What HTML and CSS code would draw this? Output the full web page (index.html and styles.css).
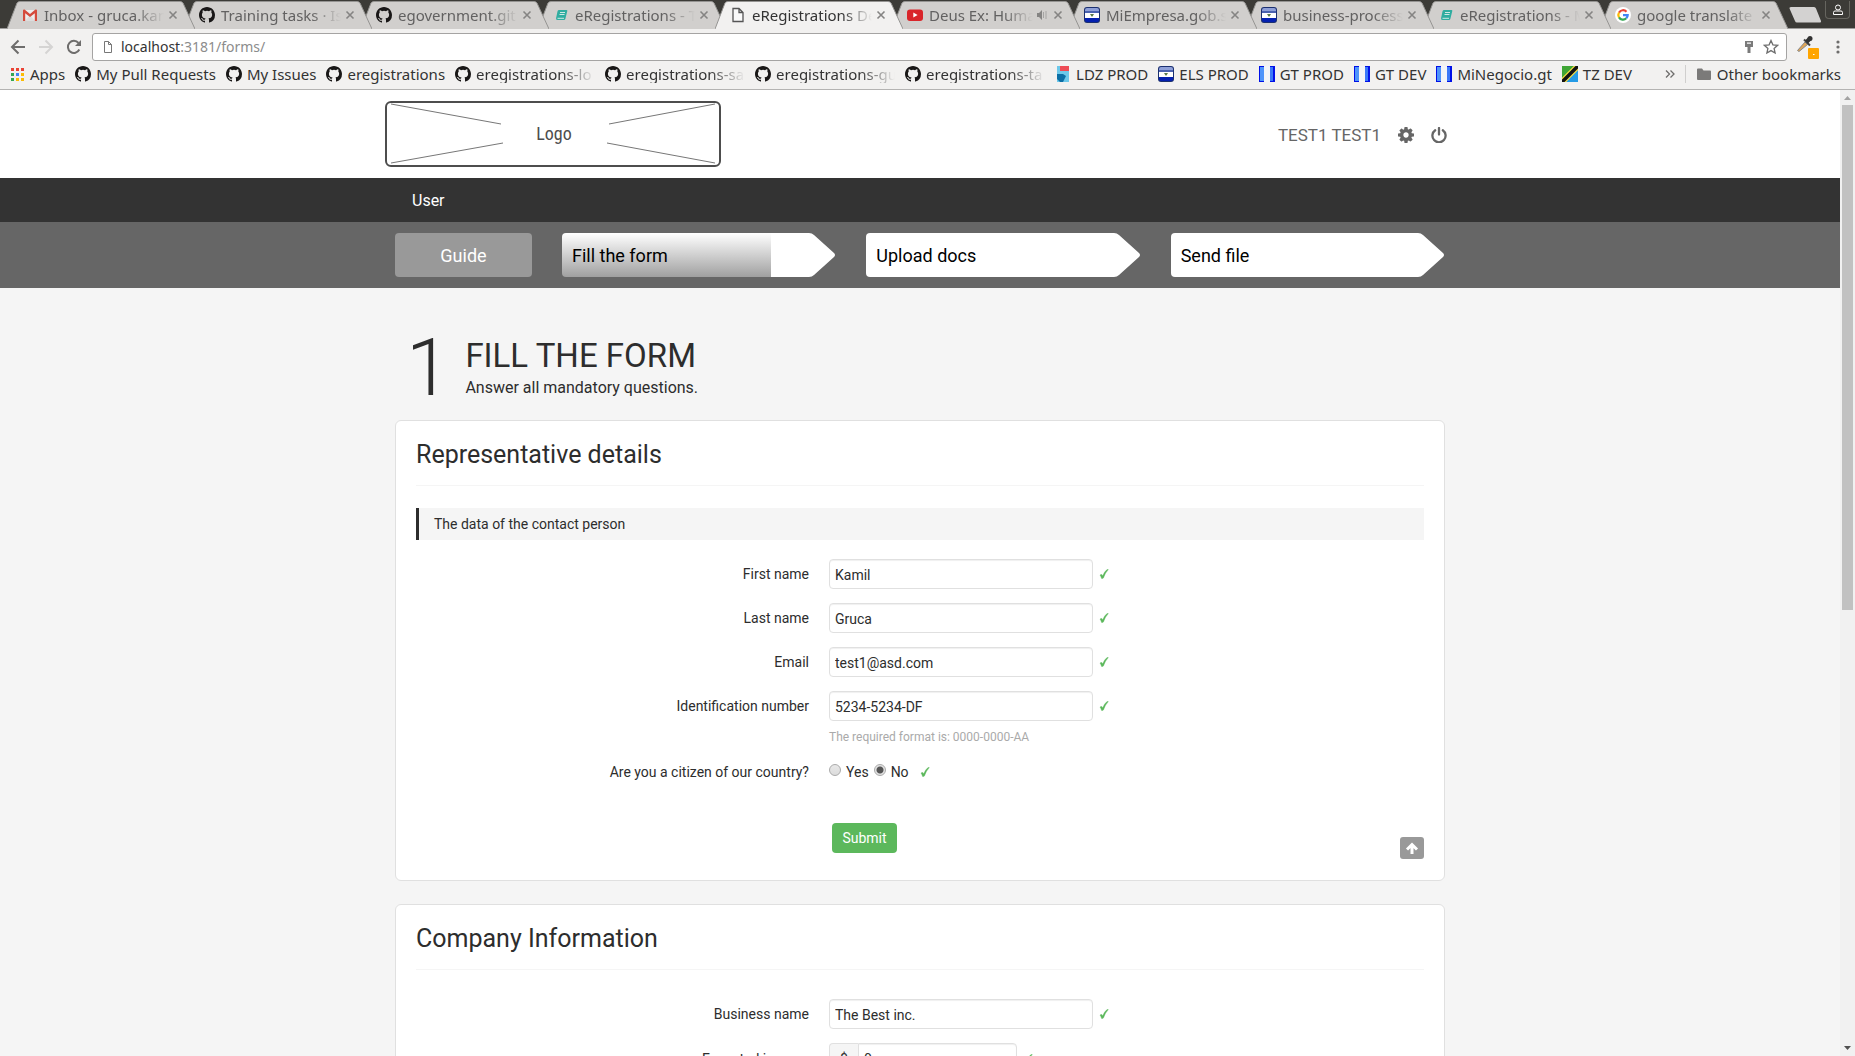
FILE: index.html
```html
<!DOCTYPE html>
<html lang="en">
<head>
<meta charset="utf-8">
<title>eRegistrations Demo</title>
<link rel="stylesheet" href="styles.css">
</head>
<body>
<svg class="sprite" aria-hidden="true">
  <symbol id="github" viewBox="0 0 16 16"><path fill="#191717" d="M8 0C3.58 0 0 3.58 0 8c0 3.54 2.29 6.53 5.47 7.59.4.07.55-.17.55-.38 0-.19-.01-.82-.01-1.49-2.01.37-2.53-.49-2.69-.94-.09-.23-.48-.94-.82-1.13-.28-.15-.68-.52-.01-.53.63-.01 1.08.58 1.23.82.72 1.21 1.87.87 2.33.66.07-.52.28-.87.51-1.07-1.78-.2-3.64-.89-3.64-3.95 0-.87.31-1.59.82-2.15-.08-.2-.36-1.02.08-2.12 0 0 .67-.21 2.2.82a7.6 7.6 0 0 1 4 0c1.53-1.04 2.2-.82 2.2-.82.44 1.1.16 1.92.08 2.12.51.56.82 1.27.82 2.15 0 3.07-1.87 3.75-3.65 3.95.29.25.54.73.54 1.48 0 1.07-.01 1.93-.01 2.2 0 .21.15.46.55.38A8.01 8.01 0 0 0 16 8c0-4.42-3.58-8-8-8z"/></symbol>
  <symbol id="gmail" viewBox="0 0 16 16"><path fill="#eee" d="M2 3h12v11H2z"/><path fill="#ddd" d="M3 14l5-6 5 6z"/><path fill="#d54b3d" d="M1 3.500q0-1 1-1h.6L8 7l5.400-4.500h.6q1 0 1 1V14h-2.200V6.300L8 10 3.200 6.300V14H1z"/></symbol>
  <symbol id="book" viewBox="0 0 16 16"><path fill="#2fada0" d="M6 3h7.500q1 0 .8 1l-2 8q-.3 1-1.300 1H4.500q-2 0-1.400-2l1.500-7Q5 3 6 3z"/><path d="M7 5.500h5M6.500 7.500h5M4.500 11.300h6.500" stroke="#cfe8e5" stroke-width="1"/></symbol>
  <symbol id="page" viewBox="0 0 16 16"><path fill="#fafafa" stroke="#555" stroke-width="1.300" d="M3 1.500h6l4 4v9H3zM9 1.500v4h4"/></symbol>
  <symbol id="youtube" viewBox="0 0 16 16"><rect y="2.500" width="16" height="11.500" rx="3" fill="#d9252a"/><path fill="#fff" d="M6.300 5.500v5l4.300-2.500z"/></symbol>
  <symbol id="salvador" viewBox="0 0 16 16"><rect width="16" height="16" rx="3" fill="#1c3070"/><path fill="#8fa0d8" d="M1 3q0-2 2-2h10q2 0 2 2v2H1z"/><path fill="#4a62b0" d="M1 4h14v2H1z"/><path fill="#fff" d="M1 6h14v5H1z"/><path fill="#5c7a4c" d="M6 7h4L8.500 9.500h-1z"/><path fill="#0420b0" d="M1 11h14v2q0 2-2 2H3q-2 0-2-2z"/></symbol>
  <symbol id="google" viewBox="0 0 16 16"><circle cx="8" cy="8" r="8" fill="#fff"/><g fill="none" stroke-width="2.200"><path stroke="#ea4335" d="M4 5.600A4.700 4.700 0 0 1 11.500 4.700"/><path stroke="#fbbc05" d="M4 5.600a4.700 4.700 0 0 0 0 4.800"/><path stroke="#34a853" d="M4 10.400a4.700 4.700 0 0 0 7.300.9"/><path stroke="#4285f4" d="M11.300 11.300A4.700 4.700 0 0 0 12.700 8.100H8"/></g></symbol>
  <symbol id="guatemala" viewBox="0 0 16 16"><path fill="#0010e8" d="M0 0h16v16H0z"/><path fill="#4e94fa" d="M1 1h4v14H1z"/><path fill="#3a78f8" d="M11 1h3v14h-3z"/><path fill="#f2f4f8" d="M5 0h6v16H5z"/></symbol>
  <symbol id="ldz" viewBox="0 0 16 16"><path fill="#6dc8ea" d="M2 0h12v16H2z"/><path fill="#ee4b55" d="M5 0h9v5H5z"/><path fill="#0b6ea5" d="M2 8h6l3 2-3 6H5L2 13z"/></symbol>
  <symbol id="tanzania" viewBox="0 0 16 16"><path fill="#3fa535" d="M0 0h16L0 16z"/><path fill="#259be6" d="M16 0v16H0z"/><path d="M0 16L16 0" stroke="#f5dc42" stroke-width="6"/><path d="M0 16L16 0" stroke="#111" stroke-width="3.500"/></symbol>
  <symbol id="close" viewBox="0 0 10 10"><path d="M1.500 1.500l7 7m0-7l-7 7" stroke="#858483" stroke-width="1.600"/></symbol>
  <symbol id="check" viewBox="0 0 10 10"><path fill="#5cb85c" stroke="#5cb85c" stroke-width=".4" d="M1 6q1-.9 1.800-.4.500.4.700 1.400Q5.500 2.500 8 .6q.6-.3 1.300 0Q6 4 4.400 9q-.8.7-1.800.5Q2.100 7.500 1 6z"/></symbol>
</svg>

<div class="tabstrip">
  <div class="tab"><svg class="tab-shape" viewBox="0 0 188 28" preserveAspectRatio="none"><path d="M0 28L10 2Q11 .5 13 .5H173Q175 .5 176 2L188 28"/></svg><svg class="fav"><use href="#gmail"/></svg><span class="tab-title">Inbox - gruca.kam</span><svg class="x"><use href="#close"/></svg></div>
  <div class="tab"><svg class="tab-shape" viewBox="0 0 188 28" preserveAspectRatio="none"><path d="M0 28L10 2Q11 .5 13 .5H173Q175 .5 176 2L188 28"/></svg><svg class="fav"><use href="#github"/></svg><span class="tab-title">Training tasks · Is</span><svg class="x"><use href="#close"/></svg></div>
  <div class="tab"><svg class="tab-shape" viewBox="0 0 188 28" preserveAspectRatio="none"><path d="M0 28L10 2Q11 .5 13 .5H173Q175 .5 176 2L188 28"/></svg><svg class="fav"><use href="#github"/></svg><span class="tab-title">egovernment.git</span><svg class="x"><use href="#close"/></svg></div>
  <div class="tab"><svg class="tab-shape" viewBox="0 0 188 28" preserveAspectRatio="none"><path d="M0 28L10 2Q11 .5 13 .5H173Q175 .5 176 2L188 28"/></svg><svg class="fav"><use href="#book"/></svg><span class="tab-title">eRegistrations - T</span><svg class="x"><use href="#close"/></svg></div>
  <div class="tab tab-active"><svg class="tab-shape" viewBox="0 0 188 28" preserveAspectRatio="none"><path d="M0 28L10 2Q11 .5 13 .5H173Q175 .5 176 2L188 28"/></svg><svg class="fav"><use href="#page"/></svg><span class="tab-title">eRegistrations De</span><svg class="x"><use href="#close"/></svg></div>
  <div class="tab"><svg class="tab-shape" viewBox="0 0 188 28" preserveAspectRatio="none"><path d="M0 28L10 2Q11 .5 13 .5H173Q175 .5 176 2L188 28"/></svg><svg class="fav"><use href="#youtube"/></svg><span class="tab-title">Deus Ex: Huma</span><svg class="sound" viewBox="0 0 10 10"><path fill="#858483" d="M0 3h2l3-3v10L2 7H0z"/><path d="M6.500 2v6M9 1v8" stroke="#a5a4a3"/></svg><svg class="x"><use href="#close"/></svg></div>
  <div class="tab"><svg class="tab-shape" viewBox="0 0 188 28" preserveAspectRatio="none"><path d="M0 28L10 2Q11 .5 13 .5H173Q175 .5 176 2L188 28"/></svg><svg class="fav"><use href="#salvador"/></svg><span class="tab-title">MiEmpresa.gob.s</span><svg class="x"><use href="#close"/></svg></div>
  <div class="tab"><svg class="tab-shape" viewBox="0 0 188 28" preserveAspectRatio="none"><path d="M0 28L10 2Q11 .5 13 .5H173Q175 .5 176 2L188 28"/></svg><svg class="fav"><use href="#salvador"/></svg><span class="tab-title">business-process</span><svg class="x"><use href="#close"/></svg></div>
  <div class="tab"><svg class="tab-shape" viewBox="0 0 188 28" preserveAspectRatio="none"><path d="M0 28L10 2Q11 .5 13 .5H173Q175 .5 176 2L188 28"/></svg><svg class="fav"><use href="#book"/></svg><span class="tab-title">eRegistrations - M</span><svg class="x"><use href="#close"/></svg></div>
  <div class="tab"><svg class="tab-shape" viewBox="0 0 188 28" preserveAspectRatio="none"><path d="M0 28L10 2Q11 .5 13 .5H173Q175 .5 176 2L188 28"/></svg><svg class="fav"><use href="#google"/></svg><span class="tab-title">google translate</span><svg class="x"><use href="#close"/></svg></div>
  <button class="new-tab" aria-label="New tab"><svg viewBox="0 0 34 16"><path fill="#d3d2d1" d="M3 0h23q1.500 0 2 1.500L33 14q.3 1.500-1 1.500H9q-1.500 0-2-1.500L1.500 1.500Q1 0 3 0z"/></svg></button>
  <button class="profile" aria-label="Profile"><svg viewBox="0 0 12 12"><path fill="none" stroke="#fff" d="M1.500 10.500V8.500Q1.500 7 3 7h6q1.500 0 1.500 1.500v2z"/><circle cx="6" cy="3.500" r="2.500" fill="none" stroke="#fff"/></svg></button>
</div>

<div class="toolbar">
  <button class="tool" aria-label="Back"><svg viewBox="0 0 16 16"><path d="M15 8H2M8.500 1.500L2 8l6.500 6.500" fill="none" stroke="#6e6d6c" stroke-width="2"/></svg></button>
  <button class="tool" aria-label="Forward"><svg viewBox="0 0 16 16"><path d="M1 8h13M7.500 1.500L14 8l-6.500 6.500" fill="none" stroke="#d5d4d3" stroke-width="2"/></svg></button>
  <button class="tool" aria-label="Reload"><svg viewBox="0 0 16 16"><path d="M13.300 10.500A6 6 0 1 1 12.500 4" fill="none" stroke="#6e6d6c" stroke-width="2"/><path fill="#6e6d6c" d="M15 1v6H9z"/></svg></button>
  <div class="address">
    <svg class="address-page" viewBox="0 0 10 12"><path fill="none" stroke="#777" d="M1.500.5h4l3 3v8h-7zM5.500.5v3h3"/></svg>
    <span class="url"><b>localhost</b>:3181/forms/</span>
    <svg class="key" viewBox="0 0 10 14"><path fill="#7a7a7a" fill-rule="evenodd" d="M1 1h8v6H6.500v6h-3V7H1zM3 2.500v1.200h4V2.500z"/></svg>
    <svg class="star" viewBox="0 0 16 16"><path fill="none" stroke="#6e6e6e" stroke-width="1.300" d="M8 1.500l1.900 4.300 4.700.5-3.500 3.100 1 4.600L8 11.600 3.900 14l1-4.600L1.400 6.300l4.700-.5z"/></svg>
  </div>
  <button class="dropper" aria-label="Color picker"><svg viewBox="0 0 24 24"><path d="M1.500 15.500L9 7l2.500 2.500L3 16.500z" fill="#e0a555" stroke="#888"/><path d="M8 4.500l6 6" stroke="#444" stroke-width="2"/><path d="M10.500 7L14 3.500" stroke="#333" stroke-width="4"/><circle cx="14" cy="3.500" r="2.500" fill="#333"/><rect x="12" y="13" width="11" height="11" rx="1" fill="#ffa500"/><path fill="#fff" d="M17 19h1.500v1H17z"/></svg></button>
  <button class="dots" aria-label="Menu"><svg viewBox="0 0 4 14"><g fill="#6e6d6c"><circle cx="2" cy="2" r="1.600"/><circle cx="2" cy="7" r="1.600"/><circle cx="2" cy="12" r="1.600"/></g></svg></button>
</div>

<nav class="bookmarks">
  <a href="#"><svg viewBox="0 0 16 16"><path fill="#ea4335" d="M2 2h3v3H2zM7 2h3v3H7zM12 2h3v3h-3z"/><path fill="#34a853" d="M2 7h3v3H2zM2 12h3v3H2z"/><path fill="#4285f4" d="M7 7h3v3H7z"/><path fill="#fbbc05" d="M12 7h3v3h-3zM7 12h3v3H7zM12 12h3v3h-3z"/></svg><span>Apps</span></a>
  <a href="#"><svg><use href="#github"/></svg><span>My Pull Requests</span></a>
  <a href="#"><svg><use href="#github"/></svg><span>My Issues</span></a>
  <a href="#"><svg><use href="#github"/></svg><span>eregistrations</span></a>
  <a class="long" href="#"><svg><use href="#github"/></svg><span>eregistrations-lo</span></a>
  <a class="long" href="#"><svg><use href="#github"/></svg><span>eregistrations-sa</span></a>
  <a class="long" href="#"><svg><use href="#github"/></svg><span>eregistrations-gu</span></a>
  <a class="long" href="#"><svg><use href="#github"/></svg><span>eregistrations-ta</span></a>
  <a href="#"><svg><use href="#ldz"/></svg><span>LDZ PROD</span></a>
  <a href="#"><svg><use href="#salvador"/></svg><span>ELS PROD</span></a>
  <a href="#"><svg><use href="#guatemala"/></svg><span>GT PROD</span></a>
  <a href="#"><svg><use href="#guatemala"/></svg><span>GT DEV</span></a>
  <a href="#"><svg><use href="#guatemala"/></svg><span>MiNegocio.gt</span></a>
  <a href="#"><svg><use href="#tanzania"/></svg><span>TZ DEV</span></a>
  <button class="more" aria-label="More bookmarks"><svg viewBox="0 0 10 8"><path d="M1 .5L4.500 4 1 7.500M5.500.5L9 4 5.500 7.500" fill="none" stroke="#6e6d6c" stroke-width="1.300"/></svg></button>
  <a class="other" href="#"><svg viewBox="0 0 16 16"><path fill="#7b7a79" d="M1 3.500q0-1 1-1h4l1.500 2H14q1 0 1 1V13q0 1-1 1H2q-1 0-1-1z"/></svg><span>Other bookmarks</span></a>
</nav>

<div class="viewport">
  <div class="page">
    <header class="header">
      <div class="wrap header-row">
        <svg class="logo" viewBox="0 0 336 66"><rect x="1" y="1" width="334" height="64" rx="5" fill="none" stroke="#4d4d4d" stroke-width="2"/><path d="M6 3l110 20M6 62l112-20M224 23L330 3M222 42l108 20" stroke="#777"/><text x="169" y="39" text-anchor="middle">Logo</text></svg>
        <div class="account">
          <span>TEST1 TEST1</span>
          <a href="#" aria-label="Settings"><svg viewBox="0 0 1536 1536"><path fill="#666" d="M1024 768q0-106-75-181t-181-75-181 75-75 181 75 181 181 75 181-75 75-181zm512-109v222q0 12-8 23t-20 13l-185 28q-19 54-39 91 35 50 107 138 10 12 10 25t-9 23q-27 37-99 108t-94 71q-12 0-26-9l-138-108q-44 23-91 38-16 136-29 186-7 28-36 28H657q-14 0-24.500-8.500T621 1506l-28-184q-49-16-90-37l-141 107q-10 9-25 9-14 0-25-11-126-114-165-168-7-10-7-23 0-12 8-23 15-21 51-66.500t54-70.500q-27-50-41-99L29 913q-13-2-21-12.500T0 877V655q0-12 8-23t19-13l186-28q14-46 39-92-40-57-107-138-10-12-10-24 0-10 9-23 26-36 98.500-107.500T337 135q13 0 26 10l138 107q44-23 91-38 16-136 29-186 7-28 36-28h222q14 0 24.500 8.500T915 30l28 184q49 16 90 37l142-107q9-9 24-9 13 0 25 10 129 119 165 170 7 8 7 22 0 12-8 23-15 21-51 66.500t-54 70.500q26 50 41 98l183 28q13 2 21 12.500t8 23.500z"/></svg></a>
          <a href="#" aria-label="Log out"><svg viewBox="0 0 16 16"><path d="M4.200 3.300a6.600 6.600 0 1 0 7.600 0M8 1v6.500" fill="none" stroke="#666" stroke-width="2.300" stroke-linecap="round"/></svg></a>
        </div>
      </div>
    </header>
    <nav class="main-nav"><div class="wrap"><a href="#">User</a></div></nav>
    <nav class="steps">
      <div class="wrap steps-row">
        <a class="guide" href="#">Guide</a>
        <a class="step step-current" href="#"><span>Fill the form</span><svg viewBox="0 0 28 44"><path d="M0 0h1q3 0 5 2l20 18q2 2 0 4L6 42q-2 2-5 2H0z"/></svg></a>
        <a class="step" href="#"><span>Upload docs</span><svg viewBox="0 0 28 44"><path d="M0 0h1q3 0 5 2l20 18q2 2 0 4L6 42q-2 2-5 2H0z"/></svg></a>
        <a class="step" href="#"><span>Send file</span><svg viewBox="0 0 28 44"><path d="M0 0h1q3 0 5 2l20 18q2 2 0 4L6 42q-2 2-5 2H0z"/></svg></a>
      </div>
    </nav>
    <main class="wrap">
      <div class="intro">
        <span class="number">1</span>
        <div><h1>FILL THE FORM</h1><p>Answer all mandatory questions.</p></div>
      </div>
      <form class="card">
        <h2>Representative details</h2>
        <p class="note">The data of the contact person</p>
        <div class="rows">
          <div class="row"><label for="first">First name</label><input id="first" type="text" value="Kamil"><svg class="check"><use href="#check"/></svg></div>
          <div class="row"><label for="last">Last name</label><input id="last" type="text" value="Gruca"><svg class="check"><use href="#check"/></svg></div>
          <div class="row"><label for="email">Email</label><input id="email" type="text" value="test1@asd.com"><svg class="check"><use href="#check"/></svg></div>
          <div class="row"><label for="ident">Identification number</label><input id="ident" type="text" value="5234-5234-DF"><svg class="check"><use href="#check"/></svg></div>
        </div>
        <p class="hint">The required format is: 0000-0000-AA</p>
        <div class="row"><span class="label">Are you a citizen of our country?</span><label class="choice"><input type="radio" name="citizen">Yes</label><label class="choice"><input type="radio" name="citizen" checked>No</label><svg class="check"><use href="#check"/></svg></div>
        <div class="actions">
          <button class="submit" type="button">Submit</button>
          <a class="to-top" href="#" aria-label="Back to top"><svg viewBox="0 0 14 14"><path d="M7 13V4M2 8.500l5-5 5 5" fill="none" stroke="#fff" stroke-width="3"/></svg></a>
        </div>
      </form>
      <form class="card">
        <h2>Company Information</h2>
        <div class="rows rows-plain">
          <div class="row"><label for="business">Business name</label><input id="business" type="text" value="The Best inc."><svg class="check"><use href="#check"/></svg></div>
          <div class="row"><label for="income">Expected income</label><div class="money"><span>$</span><input id="income" type="text" value="0"></div><svg class="check"><use href="#check"/></svg></div>
        </div>
      </form>
    </main>
  </div>
  <div class="scrollbar" aria-hidden="true">
    <svg viewBox="0 0 15 15"><path fill="#a3a3a3" d="M4 10l3.500-4 3.500 4z"/></svg>
    <div class="track"><div class="thumb"></div></div>
    <svg viewBox="0 0 15 15"><path fill="#505050" d="M4 5h7L7.500 9z"/></svg>
  </div>
</div>
</body>
</html>
```
FILE: styles.css
```css
* { box-sizing: border-box; }
body {
  margin: 0;
  height: 100vh;
  display: flex;
  flex-direction: column;
  overflow: hidden;
  background: #f5f5f5;
  color: #2d2d2d;
  font: 14px/20px Roboto, sans-serif;
}
a { color: inherit; text-decoration: none; }
button { border: 0; padding: 0; background: none; font: inherit; }
h1, h2, p { margin: 0; font-weight: 400; }
svg { flex: none; display: block; }
.sprite { position: absolute; width: 0; height: 0; }

/* browser tabs */
.tabstrip {
  flex: none;
  display: flex;
  height: 29px;
  padding: 1px 5px 0 7px;
  background: #3c3b37;
  border-bottom: 1px solid #9d9c9b;
  font: 15px/20px "Noto Sans", sans-serif;
}
.tab {
  position: relative;
  display: flex;
  align-items: center;
  flex: 0 1 188px;
  min-width: 0;
  height: 28px;
  margin-right: -11px;
  padding: 0 17px 0 15px;
  color: #626161;
}
.tab:nth-child(1) { z-index: 10; }
.tab:nth-child(2) { z-index: 9; }
.tab:nth-child(3) { z-index: 8; }
.tab:nth-child(4) { z-index: 7; }
.tab:nth-child(5) { z-index: 11; }
.tab:nth-child(6) { z-index: 5; }
.tab:nth-child(7) { z-index: 4; }
.tab:nth-child(8) { z-index: 3; }
.tab:nth-child(9) { z-index: 2; }
.tab:nth-child(10) { z-index: 1; }
.tab-shape { position: absolute; inset: 0; z-index: -1; width: 100%; height: 28px; fill: #d1cfcd; stroke: #959492; }
.tab-active { color: #333; }
.tab-active .tab-shape { fill: #f2f1f0; }
.fav { width: 16px; height: 16px; }
.tab-title {
  flex: 1;
  min-width: 0;
  margin: 0 4px 0 6px;
  overflow: hidden;
  white-space: nowrap;
  -webkit-mask-image: linear-gradient(to right, #000 calc(100% - 30px), transparent);
  mask-image: linear-gradient(to right, #000 calc(100% - 30px), transparent);
}
.x { width: 10px; height: 10px; }
.sound { width: 10px; height: 10px; margin-right: 6px; }
.new-tab { margin: 6px 0 0 11px; height: 16px; }
.new-tab svg { width: 34px; height: 16px; }
.profile {
  display: flex;
  align-items: center;
  justify-content: center;
  width: 25px;
  height: 18px;
  margin-left: auto;
  border: 1px solid #66655f;
  border-top: 0;
  border-radius: 0 0 4px 4px;
}
.profile svg { width: 12px; height: 12px; }

/* address bar */
.toolbar {
  flex: none;
  display: flex;
  align-items: center;
  gap: 12px;
  height: 36px;
  padding: 0 15px 0 10px;
  background: #f2f1f0;
}
.tool svg { width: 16px; height: 16px; }
.address {
  flex: 1;
  display: flex;
  align-items: center;
  height: 28px;
  margin: 0 -3px 0 -2px;
  padding: 0 7px 0 10px;
  background: #fff;
  border: 1px solid #a5a4a3;
  border-radius: 3px;
}
.address-page { width: 10px; height: 12px; }
.url { flex: 1; margin-left: 8px; color: #8c8c8c; font: 14px/20px "Noto Sans", sans-serif; }
.url b { color: #333; font-weight: 400; }
.key { width: 10px; height: 14px; margin-right: 9px; }
.star { width: 16px; height: 16px; }
.dropper svg { width: 24px; height: 24px; }
.dots { margin-left: 4px; }
.dots svg { width: 4px; height: 14px; }

/* bookmarks */
.bookmarks {
  flex: none;
  display: flex;
  align-items: center;
  gap: 10px;
  height: 25px;
  padding: 0 14px 6px 9px;
  background: #f2f1f0;
  border-bottom: 1px solid #b4b3b2;
  color: #333;
  font: 15px/18px "Noto Sans", sans-serif;
  white-space: nowrap;
}
.bookmarks a { display: flex; align-items: center; gap: 5px; }
.bookmarks svg { width: 16px; height: 16px; }
.bookmarks .long { width: 140px; }
.long span {
  flex: 1;
  overflow: hidden;
  -webkit-mask-image: linear-gradient(to right, #000 calc(100% - 36px), transparent);
  mask-image: linear-gradient(to right, #000 calc(100% - 36px), transparent);
}
.more { margin-left: auto; }
.bookmarks .more svg { width: 10px; height: 8px; }
.bookmarks .other { padding-left: 10px; border-left: 1px solid #d0cfce; }

/* page */
.viewport { flex: 1; display: flex; min-height: 0; overflow: hidden; }
.page { flex: 1; min-width: 0; overflow: hidden; }
.scrollbar { display: flex; flex-direction: column; width: 15px; background: #f1f1f1; }
.scrollbar svg { width: 15px; height: 15px; }
.track { flex: 1; padding: 0 2px; }
.thumb { height: 54%; background: #c1c1c1; }
.wrap { max-width: 1050px; margin: 0 auto; }
.header { background: #fff; }
.header-row { display: flex; align-items: center; justify-content: space-between; height: 88px; }
.logo { width: 336px; height: 66px; margin-left: -10px; }
.logo text { fill: #4d4d4d; font: 18px "Roboto Condensed", Roboto, sans-serif; }
.account { display: flex; align-items: center; gap: 17px; padding-top: 2px; margin-right: -2px; color: #666; font-size: 17px; }
.account svg { width: 16px; height: 16px; }
.main-nav { background: #333; }
.main-nav a { display: inline-block; padding: 13px 17px 11px; color: #fff; font-size: 16px; }
.steps { padding: 11px 0; background: #666; }
.steps-row { display: flex; gap: 30px; font-size: 18px; line-height: 46px; }
.guide { width: 137px; height: 44px; border-radius: 4px; background: #999; color: #fff; text-align: center; }
.step { flex: 1; display: flex; height: 44px; color: #000; }
.step span { flex: 1; padding-left: 10px; border-radius: 4px 0 0 4px; background: #fff; }
.step svg { width: 28px; height: 44px; fill: #fff; }
.step-current span { background: linear-gradient(#fff, #a0a0a0) left / 209px 100% no-repeat #fff; }

.intro { display: flex; gap: 15px; height: 132px; padding: 40px 0 0 11px; }
.number { font-size: 80px; font-weight: 300; line-height: 80px; }
.intro h1 { padding-top: 8px; font-size: 33px; line-height: 40px; }
.intro p { font-size: 16px; line-height: 24px; }
.card {
  margin-bottom: 23px;
  padding: 0 20px 21px;
  background: #fff;
  border: 1px solid #e0e0e0;
  border-radius: 6px;
}
.card h2 { padding: 18px 0 14px; border-bottom: 1px solid #f5f5f5; font-size: 25px; line-height: 32px; }
.note { margin: 22px 0 19px; padding: 6px 15px; border-left: 3px solid #2d2d2d; background: #f5f5f5; }
.rows { display: grid; gap: 14px; }
.rows-plain { margin-top: 29px; }
.row { display: flex; align-items: center; }
.row > label:first-child, .label { width: 393px; margin-right: 20px; text-align: right; }
.row input[type="text"] {
  width: 264px;
  height: 30px;
  padding: 2px 5px 0;
  border: 1px solid #e0e0e0;
  border-radius: 4px;
  background: #fff;
  box-shadow: inset 0 1px 1px #f0f0f0;
  color: #2d2d2d;
  font: inherit;
}
.check { width: 10px; height: 10px; margin-left: 6px; }
.hint { margin: 6px 0 15px 413px; color: #aaa; font-size: 12px; }
.choice { display: flex; align-items: center; margin-right: 5px; }
.choice input {
  appearance: none;
  width: 12px;
  height: 12px;
  margin: 0 5px 4px 0;
  border: 1px solid #aaa;
  border-radius: 50%;
  background: linear-gradient(#e8e8e8, #dcdcdc);
}
.choice input:checked { background: radial-gradient(circle, #555 0 3px, #e2e2e2 4px); }
.actions { display: flex; justify-content: space-between; align-items: flex-start; padding: 41px 0 0 416px; }
.submit { width: 65px; height: 30px; border-radius: 4px; background: #5cb85c; color: #fff; }
.to-top { display: flex; align-items: center; justify-content: center; width: 24px; height: 22px; margin-top: 14px; border-radius: 3px; background: #999; }
.to-top svg { width: 14px; height: 14px; }
.money { display: flex; width: 188px; }
.money span { width: 29px; border: 1px solid #e0e0e0; border-right: 0; border-radius: 4px 0 0 4px; background: #f5f5f5; line-height: 30px; text-align: center; }
.row .money input[type="text"] { flex: 1; min-width: 0; border-radius: 0 4px 4px 0; }
```
